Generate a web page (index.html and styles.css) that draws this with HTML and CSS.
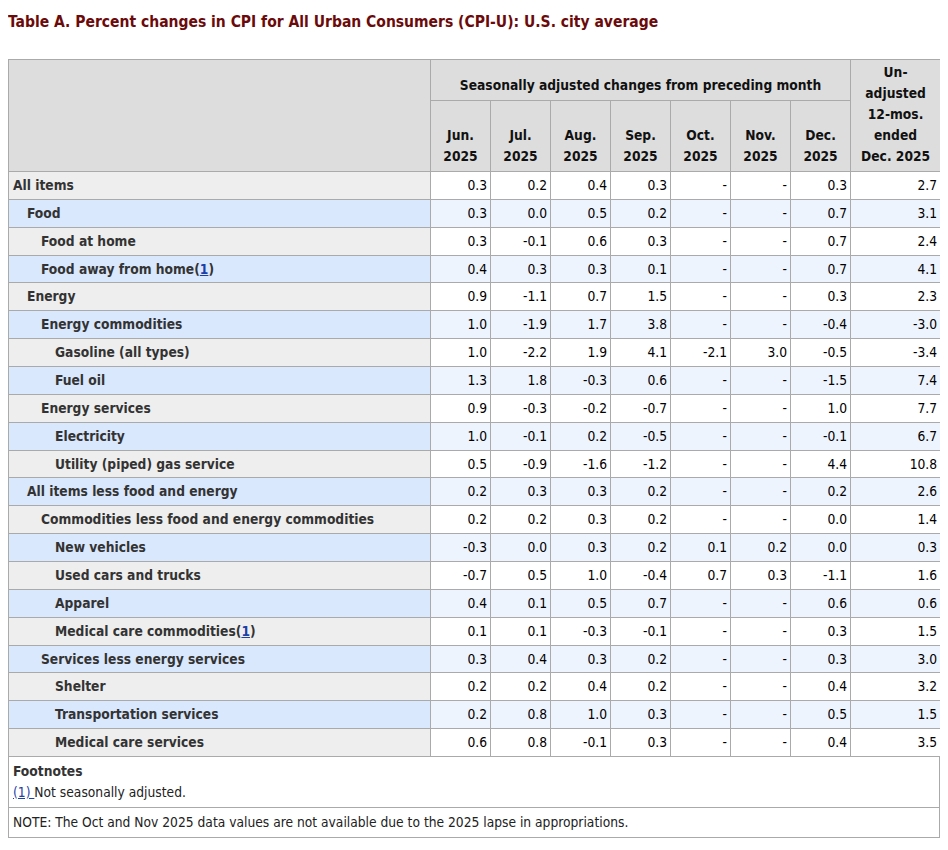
FILE: index.html
```html
<!DOCTYPE html>
<html lang="en">
<head>
<meta charset="utf-8">
<title>Table A. Percent changes in CPI</title>
<link rel="stylesheet" href="styles.css">
</head>
<body>
<div class="title">Table A. Percent changes in CPI for All Urban Consumers (CPI-U): U.S. city average</div>
<table class="cpi">
  <colgroup>
    <col class="c-label">
    <col class="c-month"><col class="c-month"><col class="c-month"><col class="c-month">
    <col class="c-month"><col class="c-month"><col class="c-month">
    <col class="c-unadj">
  </colgroup>
  <thead>
    <tr>
      <th class="blank" rowspan="2"></th>
      <th class="group" colspan="7">Seasonally adjusted changes from preceding month</th>
      <th class="unadj" rowspan="2">Un-<br>adjusted<br>12-mos.<br>ended<br>Dec. 2025</th>
    </tr>
    <tr>
      <th class="month">Jun.<br>2025</th>
      <th class="month">Jul.<br>2025</th>
      <th class="month">Aug.<br>2025</th>
      <th class="month">Sep.<br>2025</th>
      <th class="month">Oct.<br>2025</th>
      <th class="month">Nov.<br>2025</th>
      <th class="month">Dec.<br>2025</th>
    </tr>
  </thead>
  <tbody>
    <tr><th class="lvl0">All items</th><td>0.3</td><td>0.2</td><td>0.4</td><td>0.3</td><td>-</td><td>-</td><td>0.3</td><td>2.7</td></tr>
    <tr><th class="lvl1">Food</th><td>0.3</td><td>0.0</td><td>0.5</td><td>0.2</td><td>-</td><td>-</td><td>0.7</td><td>3.1</td></tr>
    <tr><th class="lvl2">Food at home</th><td>0.3</td><td>-0.1</td><td>0.6</td><td>0.3</td><td>-</td><td>-</td><td>0.7</td><td>2.4</td></tr>
    <tr><th class="lvl2">Food away from home(<a href="#fn1">1</a>)</th><td>0.4</td><td>0.3</td><td>0.3</td><td>0.1</td><td>-</td><td>-</td><td>0.7</td><td>4.1</td></tr>
    <tr><th class="lvl1">Energy</th><td>0.9</td><td>-1.1</td><td>0.7</td><td>1.5</td><td>-</td><td>-</td><td>0.3</td><td>2.3</td></tr>
    <tr><th class="lvl2">Energy commodities</th><td>1.0</td><td>-1.9</td><td>1.7</td><td>3.8</td><td>-</td><td>-</td><td>-0.4</td><td>-3.0</td></tr>
    <tr><th class="lvl3">Gasoline (all types)</th><td>1.0</td><td>-2.2</td><td>1.9</td><td>4.1</td><td>-2.1</td><td>3.0</td><td>-0.5</td><td>-3.4</td></tr>
    <tr><th class="lvl3">Fuel oil</th><td>1.3</td><td>1.8</td><td>-0.3</td><td>0.6</td><td>-</td><td>-</td><td>-1.5</td><td>7.4</td></tr>
    <tr><th class="lvl2">Energy services</th><td>0.9</td><td>-0.3</td><td>-0.2</td><td>-0.7</td><td>-</td><td>-</td><td>1.0</td><td>7.7</td></tr>
    <tr><th class="lvl3">Electricity</th><td>1.0</td><td>-0.1</td><td>0.2</td><td>-0.5</td><td>-</td><td>-</td><td>-0.1</td><td>6.7</td></tr>
    <tr><th class="lvl3">Utility (piped) gas service</th><td>0.5</td><td>-0.9</td><td>-1.6</td><td>-1.2</td><td>-</td><td>-</td><td>4.4</td><td>10.8</td></tr>
    <tr><th class="lvl1">All items less food and energy</th><td>0.2</td><td>0.3</td><td>0.3</td><td>0.2</td><td>-</td><td>-</td><td>0.2</td><td>2.6</td></tr>
    <tr><th class="lvl2">Commodities less food and energy commodities</th><td>0.2</td><td>0.2</td><td>0.3</td><td>0.2</td><td>-</td><td>-</td><td>0.0</td><td>1.4</td></tr>
    <tr><th class="lvl3">New vehicles</th><td>-0.3</td><td>0.0</td><td>0.3</td><td>0.2</td><td>0.1</td><td>0.2</td><td>0.0</td><td>0.3</td></tr>
    <tr><th class="lvl3">Used cars and trucks</th><td>-0.7</td><td>0.5</td><td>1.0</td><td>-0.4</td><td>0.7</td><td>0.3</td><td>-1.1</td><td>1.6</td></tr>
    <tr><th class="lvl3">Apparel</th><td>0.4</td><td>0.1</td><td>0.5</td><td>0.7</td><td>-</td><td>-</td><td>0.6</td><td>0.6</td></tr>
    <tr><th class="lvl3">Medical care commodities(<a href="#fn1">1</a>)</th><td>0.1</td><td>0.1</td><td>-0.3</td><td>-0.1</td><td>-</td><td>-</td><td>0.3</td><td>1.5</td></tr>
    <tr><th class="lvl2">Services less energy services</th><td>0.3</td><td>0.4</td><td>0.3</td><td>0.2</td><td>-</td><td>-</td><td>0.3</td><td>3.0</td></tr>
    <tr><th class="lvl3">Shelter</th><td>0.2</td><td>0.2</td><td>0.4</td><td>0.2</td><td>-</td><td>-</td><td>0.4</td><td>3.2</td></tr>
    <tr><th class="lvl3">Transportation services</th><td>0.2</td><td>0.8</td><td>1.0</td><td>0.3</td><td>-</td><td>-</td><td>0.5</td><td>1.5</td></tr>
    <tr><th class="lvl3">Medical care services</th><td>0.6</td><td>0.8</td><td>-0.1</td><td>0.3</td><td>-</td><td>-</td><td>0.4</td><td>3.5</td></tr>
  </tbody>
</table>
<div class="notes">
  <div class="footnotes">
    <div class="fn-title">Footnotes</div>
    <div id="fn1"><a href="#fn1">(1) </a>Not seasonally adjusted.</div>
  </div>
  <div class="note">NOTE: The Oct and Nov 2025 data values are not available due to the 2025 lapse in appropriations.</div>
</div>
</body>
</html>
```
FILE: styles.css
```css
body {
  margin: 8px;
  background: #ffffff;
  font-family: "DejaVu Sans Condensed", "DejaVu Sans", sans-serif;
  font-stretch: condensed;
  font-size: 13.7px;
  color: #000;
}

.title {
  margin: 2px 0 25px;
  line-height: 24px;
  font-size: 15.5px;
  font-weight: bold;
  color: #6b0a0a;
}

.cpi {
  width: 932px;
  border-collapse: collapse;
  border: 1px solid #aaaaaa;
  table-layout: fixed;
}

.c-label { width: 422px; }
.c-month { width: 60px; }
.c-unadj { width: 90px; }

.cpi th,
.cpi td {
  border: 1px solid #aaaaaa;
  line-height: 21px;
}

.cpi thead th {
  background: #dddddd;
  font-weight: bold;
  color: #111;
  text-align: center;
  vertical-align: bottom;
  padding: 0 1px 4px;
}

.cpi .group { height: 36px; }
.cpi .month { height: 66px; }

.cpi tbody th,
.cpi tbody td {
  line-height: 20.86px;
  padding-top: 3px;
  padding-bottom: 3px;
}

.cpi tbody th {
  background: #eeeeee;
  color: #333333;
  font-weight: bold;
  text-align: left;
  padding-right: 4px;
  white-space: nowrap;
}

.cpi tbody td {
  background: #ffffff;
  text-align: right;
  padding-left: 2px;
  padding-right: 3px;
  color: #000;
}

.cpi tbody tr:nth-child(even) th { background: #dae8fd; }
.cpi tbody tr:nth-child(even) td { background: #eef4fe; }

.cpi .lvl0 { padding-left: 4px; }
.cpi .lvl1 { padding-left: 18px; }
.cpi .lvl2 { padding-left: 32px; }
.cpi .lvl3 { padding-left: 46px; }

a { color: #1f3fa6; text-decoration: underline; }

.notes {
  width: 932px;
  box-sizing: border-box;
  border: 1px solid #aaaaaa;
  border-top: none;
  color: #222;
}

.footnotes {
  padding: 4px;
  line-height: 21px;
}

.fn-title {
  font-weight: bold;
  color: #333333;
}

.note {
  border-top: 1px solid #aaaaaa;
  padding: 4px;
  line-height: 21px;
}
```
